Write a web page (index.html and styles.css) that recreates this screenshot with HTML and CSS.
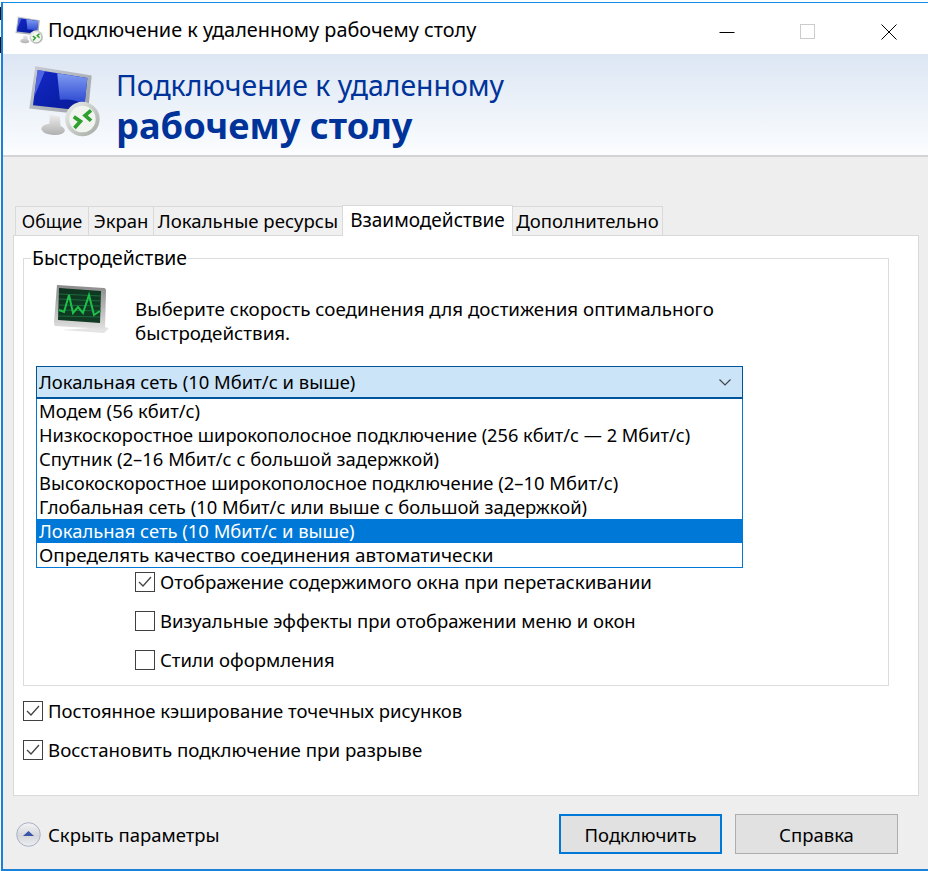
FILE: index.html
```html
<!DOCTYPE html>
<html lang="ru">
<head>
<meta charset="utf-8">
<title>Подключение к удаленному рабочему столу</title>
<link rel="stylesheet" href="styles.css">
</head>
<body>
<svg class="defs" width="0" height="0" aria-hidden="true">
  <defs>
    <linearGradient id="scr" x1="0" y1="0" x2="1" y2="1">
      <stop offset="0" stop-color="#1428c8"/><stop offset="0.6" stop-color="#0a1fa8"/><stop offset="1" stop-color="#0c1a90"/>
    </linearGradient>
    <linearGradient id="gloss" x1="0" y1="0" x2="0" y2="1">
      <stop offset="0" stop-color="#7f9cf2"/><stop offset="1" stop-color="#2a46d0"/>
    </linearGradient>
    <linearGradient id="frame" x1="0" y1="0" x2="1" y2="1">
      <stop offset="0" stop-color="#c8ccd4"/><stop offset="1" stop-color="#9a9ea4"/>
    </linearGradient>
    <linearGradient id="base" x1="0" y1="0" x2="0" y2="1">
      <stop offset="0" stop-color="#ececec"/><stop offset="1" stop-color="#b0b0b0"/>
    </linearGradient>
    <linearGradient id="ring" x1="0" y1="0" x2="1" y2="1">
      <stop offset="0" stop-color="#eef0ee"/><stop offset="1" stop-color="#a2a8a2"/>
    </linearGradient>
    <symbol id="rdp" viewBox="85 195 215 217">
      <path d="M150 345 L180 350 L182 378 Q196 385 195 394 Q188 408 160 406 Q128 404 124 388 Q124 376 148 372Z" fill="url(#base)"/>
      <path d="M106 199 L276 227 L264 346 L88 326Z" fill="url(#frame)"/>
      <path d="M113 210 L263 234 L252 333 L99 316Z" fill="url(#scr)"/>
      <path d="M172 220 L263 234 L255 312 Q215 295 180 300Z" fill="url(#gloss)"/>
      <path d="M113 210 L135 214 L103 290Z" fill="#6a7ff0" opacity=".7"/>
      <circle cx="248" cy="358" r="52" fill="url(#ring)"/>
      <circle cx="248" cy="358" r="40" fill="#f2f4f0"/>
      <path d="M222 351 L242 365 L224 385" stroke="#2da02d" stroke-width="11" fill="none"/>
      <path d="M274 332 L256 347 L274 363" stroke="#2da02d" stroke-width="11" fill="none"/>
    </symbol>
  </defs>
</svg>
<div class="window">
  <header class="titlebar">
    <div class="title-left">
      <svg class="icon-small"><use href="#rdp"/></svg>
      <span class="title-text">Подключение к удаленному рабочему столу</span>
    </div>
    <div class="controls">
      <svg class="ctl" viewBox="0 0 16 16"><path d="M0.5 8.5H15.5" stroke="#000" fill="none"/></svg>
      <svg class="ctl" viewBox="0 0 16 16"><rect x="0.5" y="0.5" width="14" height="14" stroke="#ccc" fill="none"/></svg>
      <svg class="ctl" viewBox="0 0 16 16"><path d="M0.5 0.5L15.5 15.5M15.5 0.5L0.5 15.5" stroke="#000" fill="none"/></svg>
    </div>
  </header>
  <section class="banner">
    <svg class="icon-large"><use href="#rdp"/></svg>
    <div class="banner-text">
      <div class="banner-line">Подключение к удаленному</div>
      <div class="banner-bold">рабочему столу</div>
    </div>
  </section>
  <main class="content">
    <nav class="tabs">
      <div class="tab">Общие</div>
      <div class="tab">Экран</div>
      <div class="tab">Локальные ресурсы</div>
      <div class="tab tab-active">Взаимодействие</div>
      <div class="tab">Дополнительно</div>
    </nav>
    <div class="panel">
      <fieldset class="group">
        <legend class="legend">Быстродействие</legend>
        <div class="intro">
          <svg class="perf" viewBox="0 0 56 48">
            <defs>
              <linearGradient id="pf" x1="0" y1="0" x2="0" y2="1"><stop offset="0" stop-color="#8a8a8a"/><stop offset="1" stop-color="#e0e0e0"/></linearGradient>
              <linearGradient id="ps" x1="0" y1="0" x2="1" y2="1"><stop offset="0" stop-color="#10301f"/><stop offset="0.5" stop-color="#0e3a22"/><stop offset="1" stop-color="#123a24"/></linearGradient>
            </defs>
            <path d="M8 45 L50 48 L55 43 L50 42Z" fill="#d8d8d8" opacity=".7"/>
            <path d="M3 0 L50 3 Q52 3 52 6 L51 44 L1 41 Q0 40 0 37Z" fill="url(#pf)"/>
            <path d="M5 3 L47 6 L46 38 L4 35Z" fill="url(#ps)"/>
            <path d="M5 9 L47 11 M5 14 L47 16 M5 20 L47 21 M4 25 L47 26 M4 31 L46 32" stroke="#1d6a3c" stroke-width="1" fill="none"/>
            <path d="M5 25 L10 27 L15 10 L19 28 L24 22 L29 28 L35 10 L40 30 L46 26" stroke="#1fc04a" stroke-width="2" fill="none"/>
          </svg>
          <p class="intro-text">Выберите скорость соединения для достижения оптимального<br>быстродействия.</p>
        </div>
        <div class="select-wrap">
          <div class="select">
            <span>Локальная сеть (10 Мбит/с и выше)</span>
            <svg class="chev" viewBox="0 0 12 7"><path d="M0.5 0.5L6 6L11.5 0.5" stroke="#444" stroke-width="1.2" fill="none"/></svg>
          </div>
          <ul class="list">
            <li>Модем (56 кбит/с)</li>
            <li>Низкоскоростное широкополосное подключение (256 кбит/с — 2 Мбит/с)</li>
            <li>Спутник (2–16 Мбит/с с большой задержкой)</li>
            <li>Высокоскоростное широкополосное подключение (2–10 Мбит/с)</li>
            <li>Глобальная сеть (10 Мбит/с или выше с большой задержкой)</li>
            <li class="selected">Локальная сеть (10 Мбит/с и выше)</li>
            <li>Определять качество соединения автоматически</li>
          </ul>
        </div>
        <div class="checks">
          <label class="check"><span class="box"><svg viewBox="0 0 18 18"><path d="M3 9L7 13L15 4" stroke="#444" stroke-width="1.3" fill="none"/></svg></span>Отображение содержимого окна при перетаскивании</label>
          <label class="check"><span class="box"></span>Визуальные эффекты при отображении меню и окон</label>
          <label class="check"><span class="box"></span>Стили оформления</label>
        </div>
      </fieldset>
      <div class="outer-checks">
        <label class="check"><span class="box"><svg viewBox="0 0 18 18"><path d="M3 9L7 13L15 4" stroke="#444" stroke-width="1.3" fill="none"/></svg></span>Постоянное кэширование точечных рисунков</label>
        <label class="check"><span class="box"><svg viewBox="0 0 18 18"><path d="M3 9L7 13L15 4" stroke="#444" stroke-width="1.3" fill="none"/></svg></span>Восстановить подключение при разрыве</label>
      </div>
    </div>
    <footer class="footer">
      <div class="toggle">
        <svg class="toggle-icon" viewBox="0 0 25 25">
          <defs>
            <linearGradient id="tg" x1="0" y1="0" x2="0" y2="1"><stop offset="0" stop-color="#f4f4f6"/><stop offset="0.55" stop-color="#d4d6da"/><stop offset="1" stop-color="#eef0f2"/></linearGradient>
          </defs>
          <circle cx="12.5" cy="12.5" r="11.8" fill="url(#tg)" stroke="#a9b0c8"/>
          <path d="M12.5 9L18 14H7Z" fill="#3a55a8"/>
        </svg>
        <span>Скрыть параметры</span>
      </div>
      <div class="buttons">
        <button class="btn btn-default">Подключить</button>
        <button class="btn">Справка</button>
      </div>
    </footer>
  </main>
</div>
</body>
</html>
```
FILE: styles.css
```css
* { box-sizing: border-box; }
html, body { margin: 0; padding: 0; }
body {
  width: 928px;
  height: 871px;
  overflow: hidden;
  background: #fff;
  font-family: "Noto Sans", sans-serif;
  font-size: 18.5px;
  color: #000;
  padding: 2px 0 0 1px;
  position: relative;
}
body::before {
  content: "";
  position: absolute;
  left: 0;
  top: 7px;
  width: 1px;
  height: 46px;
  background: linear-gradient(#111 0 28%, #fff 28% 65%, #111 65%);
}
.defs { position: absolute; }
.window {
  height: 869px;
  border-top: 1px solid #0f8ce8;
  border-left: 2px solid #1a80d8;
  border-bottom: 2px solid #1a80d8;
  background: #eeeeee;
  display: flex;
  flex-direction: column;
}
.titlebar {
  height: 51px;
  background: #fff;
  display: flex;
  justify-content: space-between;
  align-items: center;
  flex: none;
}
.title-left { display: flex; align-items: center; }
.icon-small { width: 28px; height: 28px; margin-left: 12px; margin-top: 2px; }
.title-text { margin-left: 5px; margin-top: 2px; font-size: 19.85px; }
.controls { display: flex; gap: 65px; margin-right: 31px; margin-top: 6px; }
.ctl { width: 16px; height: 16px; display: block; }
.banner {
  height: 103px;
  flex: none;
  display: flex;
  background: linear-gradient(#dce6f3, #fafcfe 96%);
  border-bottom: 2px solid #d4d4d4;
}
.icon-large { width: 72px; height: 72px; margin: 11px 0 0 25px; flex: none; }
.banner-text { margin: 12px 0 0 16px; color: #003399; }
.banner-line { font-size: 28.4px; line-height: 38px; }
.banner-bold { font-size: 36.2px; font-weight: 700; line-height: 42px; }
.content {
  flex: 1;
  padding: 49px 0 0 10px;
  display: flex;
  flex-direction: column;
}
.tabs { display: flex; padding-left: 2px; height: 29px; position: relative; z-index: 1; }
.tab {
  height: 29px;
  text-align: center;
  line-height: 28px;
  margin-right: -1px;
  border: 1px solid #d9d9d9;
  border-bottom: none;
  background: #f0f0f0;
  white-space: nowrap;
  flex: none;
}
.tab:nth-child(1) { width: 74px; font-size: 17.6px; }
.tab:nth-child(2) { width: 66px; }
.tab:nth-child(3) { width: 190px; font-size: 18.6px; }
.tab:nth-child(4) { width: 171px; font-size: 19px; }
.tab:nth-child(5) { width: 151px; }
.tab-active {
  background: #fff;
  height: 31px;
  margin-top: -1px;
  line-height: 29px;
}
.panel {
  width: 906px;
  height: 561px;
  flex: none;
  background: #fff;
  border: 1px solid #d9d9d9;
  padding: 11px 0 0 9px;
}
.group {
  margin: 0;
  padding: 0;
  width: 866px;
  height: 439px;
  border: 1px solid #dcdcdc;
  position: relative;
  min-width: 0;
}
.legend { padding: 0 1px; margin-left: 7px; line-height: 22px; font-size: 19.4px; }
.intro { display: flex; padding: 16px 0 0 30px; }
.perf { width: 56px; height: 48px; flex: none; }
.intro-text { margin: 12px 0 0 25px; line-height: 24px; font-size: 18.75px; }
.select-wrap { position: relative; margin: 21px 0 0 12px; width: 707px; }
.select {
  height: 33px;
  background: #cce4f7;
  border: 1px solid #005499;
  border-bottom-width: 2px;
  padding: 0 0 0 2px;
  line-height: 30px;
  display: flex;
  justify-content: space-between;
  align-items: center;
  font-size: 18.45px;
}
.chev { width: 12px; height: 7px; margin-right: 11px; }
.list {
  position: absolute;
  left: 0;
  top: 33px;
  width: 707px;
  height: 169px;
  margin: 0;
  padding: 0;
  list-style: none;
  background: #fff;
  border: 1px solid #0078d7;
  border-top: none;
  z-index: 2;
  font-size: 18.4px;
}
.list li { height: 24px; line-height: 24px; padding-left: 2px; white-space: nowrap; }
.list li:nth-child(2) { font-size: 18.2px; }
.list li:nth-child(7) { font-size: 18.85px; }
.list .selected { background: #0078d7; color: #fff; }
.checks { padding: 173px 0 0 111px; display: flex; flex-direction: column; gap: 19px; }
.check { display: flex; align-items: center; height: 20px; white-space: nowrap; line-height: 18px; }
.checks .check:first-child { font-size: 18.7px; }
.outer-checks .check:last-child { font-size: 18.7px; }
.box {
  width: 20px;
  height: 20px;
  flex: none;
  border: 1px solid #404040;
  background: #fff;
  margin-right: 5px;
  display: block;
}
.box svg { display: block; width: 18px; height: 18px; }
.outer-checks { display: flex; flex-direction: column; gap: 19px; margin-top: 15px; }
.footer {
  flex: 1;
  display: flex;
  justify-content: space-between;
  padding: 18px 30px 0 3px;
}
.toggle { display: flex; align-items: center; height: 40px; }
.toggle-icon { width: 25px; height: 25px; margin-right: 7px; }
.buttons { display: flex; gap: 13px; }
.btn {
  width: 163px;
  height: 40px;
  background: #e1e1e1;
  border: 1px solid #adadad;
  font: inherit;
  color: #000;
  padding: 0;
}
.btn-default { border: 2px solid #0078d7; }
```
